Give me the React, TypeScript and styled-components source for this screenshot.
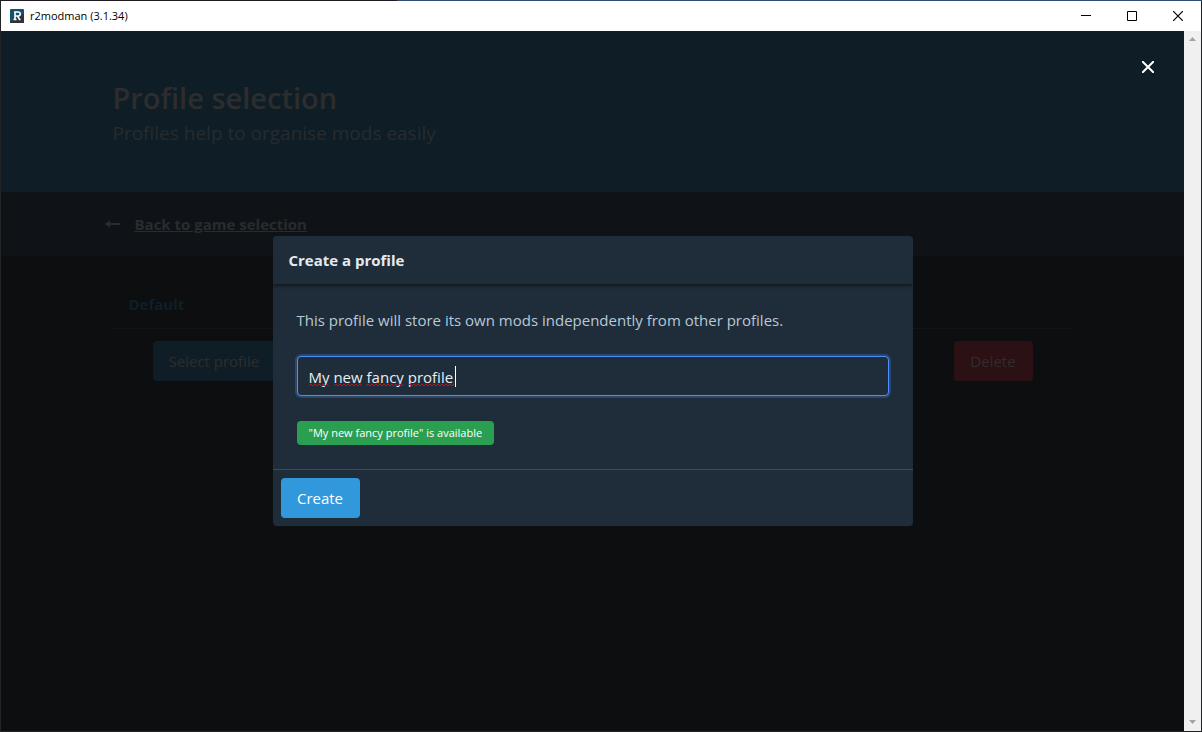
import React, { useState } from "react";
import styled, { createGlobalStyle } from "styled-components";

const GlobalStyle = createGlobalStyle`
  *, *::before, *::after { box-sizing: border-box; }
  html, body, #root { height: 100%; }
  body {
    margin: 0;
    overflow: hidden;
    background: #202124;
    font-family: "Segoe UI", "Open Sans", "Noto Sans", sans-serif;
    font-size: 15px;
    line-height: 24px;
  }
  h1, h2, p { margin: 0; font-size: inherit; font-weight: inherit; }
  button, input { font: inherit; }
`;

const Frame = styled.div`
  display: flex;
  flex-direction: column;
  height: 100vh;
  padding: 1px;
  background: linear-gradient(to right, #1d1b1f 33%, #2b4f70 33%) top / 100% 1px no-repeat #232425;
`;

const TitleBar = styled.header`
  display: flex;
  align-items: center;
  flex: none;
  height: 30px;
  padding-left: 9px;
  background: #fff;
  color: #000;
`;

const TitleText = styled.span`
  flex: 1;
  margin-left: 6px;
  font-size: 11px;
  line-height: 16px;
`;

const WindowButton = styled.button`
  display: grid;
  place-items: center;
  width: 46px;
  height: 30px;
  padding: 0;
  border: 0;
  background: transparent;
  color: #000;
`;

const Viewport = styled.div`
  display: flex;
  flex: 1;
  min-height: 0;
`;

const Page = styled.main`
  position: relative;
  flex: 1;
  min-width: 0;
  background: #0d0e10;
`;

const Container = styled.div`
  width: 100%;
  max-width: 960px;
  margin: 0 auto;
`;

const Hero = styled.section`
  height: 161px;
  padding-top: 49px;
  background: #0f1e26;
`;

const HeroTitle = styled.h1`
  color: #2d2d2d;
  font-size: 29px;
  font-weight: 600;
  line-height: 36px;
`;

const HeroSubtitle = styled.p`
  color: #272b2d;
  font-size: 19px;
  line-height: 34px;
`;

const BackBar = styled.nav`
  height: 64px;
  padding-top: 18px;
  background: #0f1317;
`;

const BackLink = styled.a`
  display: inline-flex;
  align-items: center;
  gap: 15px;
  margin-left: -8px;
  color: #292b2e;
  font-weight: 700;
  text-decoration: none;

  span { text-decoration: underline; }
`;

const ProfileName = styled.h2`
  padding: 36px 16px 12px;
  border-bottom: 1px solid #131416;
  color: #0f1f2a;
  font-weight: 700;
`;

const ProfileActions = styled.div`
  display: flex;
  justify-content: space-between;
  padding: 12px 40px;
`;

type Tone = "primary" | "mutedPrimary" | "mutedDanger";

const tones: Record<Tone, [string, string]> = {
  primary: ["#3298dc", "#fff"],
  mutedPrimary: ["#0f1e26", "#2d2d2d"],
  mutedDanger: ["#2b1014", "#2f2d2d"],
};

const Button = styled.button<{ $tone: Tone }>`
  min-width: 79px;
  height: 40px;
  padding: 0 16px;
  border: 0;
  border-radius: 4px;
  background: ${({ $tone }) => tones[$tone][0]};
  color: ${({ $tone }) => tones[$tone][1]};
`;

const ModalLayer = styled.div`
  position: absolute;
  inset: 0;
  display: flex;
  align-items: center;
  justify-content: center;
`;

const CloseButton = styled.button`
  position: absolute;
  top: 20px;
  right: 20px;
  display: grid;
  place-items: center;
  width: 32px;
  height: 32px;
  padding: 0;
  border: 0;
  background: transparent;
  color: #fff;
`;

const Card = styled.form`
  width: 640px;
  max-width: 100%;
  overflow: hidden;
  border-radius: 4px;
  background: #1f2d3a;
`;

const CardHeader = styled.h2`
  padding: 12px 16px;
  color: #e4eaf0;
  font-weight: 700;
  box-shadow: 0 1px 4px rgba(0, 0, 0, 0.7);
`;

const CardBody = styled.div`
  display: flex;
  flex-direction: column;
  align-items: flex-start;
  gap: 24px;
  padding: 24px;
  color: #b8c8d8;
`;

const Field = styled.div`
  position: relative;
  width: 100%;
`;

const NameInput = styled.input`
  display: block;
  width: 100%;
  height: 40px;
  padding: 2px 11px 0;
  border: 1px solid #4f8ffa;
  border-radius: 4px;
  outline: 0;
  background: #1f2d3a;
  box-shadow: 0 0 0 2px rgba(72, 127, 230, 0.3);
  color: #e8edf2;
`;

const TextMarks = styled.svg`
  position: absolute;
  top: 10px;
  left: 12px;
  pointer-events: none;
`;

const Status = styled.div`
  display: flex;
  align-items: flex-end;
  height: 25px;
`;

const Tag = styled.output`
  height: 24px;
  padding: 0 12px;
  border-radius: 4px;
  background: #2a9f52;
  color: #fff;
  font-size: 11px;
`;

const CardFooter = styled.footer`
  padding: 8px;
  border-top: 1px solid #3b4a58;
  line-height: 0;
`;

const Scrollbar = styled.div`
  display: flex;
  flex-direction: column;
  align-items: center;
  justify-content: space-between;
  flex: none;
  width: 17px;
  padding: 6px 0;
  background: #f0f0f0;
`;

const wordSpans: [number, number][] = [
  [0, 21],
  [25, 53],
  [57, 95],
  [99, 145],
];

function squiggle(from: number, to: number) {
  let d = `M${from} 20`;
  for (let x = from + 2, up = false; x <= to; x += 2, up = !up) {
    d += ` L${x} ${up ? 20 : 18}`;
  }
  return d;
}

export default function App() {
  const [name, setName] = useState("My new fancy profile");

  return (
    <>
      <GlobalStyle />
      <Frame>
        <TitleBar>
          <svg width="14" height="14" viewBox="0 0 14 14" aria-hidden="true">
            <rect width="14" height="14" rx="1" fill="#17506b" />
            <path d="M0 13 L14 5 V14 H0Z" fill="#303436" />
            <path d="M4 3h4.2a2 2 0 0 1 0 4H5.500M5 3v8M3.500 10.500h3M7.500 7l2 3.500h1" fill="none" stroke="#fff" strokeWidth="1.600" />
          </svg>
          <TitleText>r2modman (3.1.34)</TitleText>
          <WindowButton aria-label="Minimize">
            <svg width="10" height="10"><path d="M0 4.500h10" stroke="currentColor" /></svg>
          </WindowButton>
          <WindowButton aria-label="Maximize">
            <svg width="10" height="10"><path d="M.5.5h9v9h-9z" fill="none" stroke="currentColor" /></svg>
          </WindowButton>
          <WindowButton aria-label="Close window">
            <svg width="10" height="10"><path d="M0 0l10 10M10 0L0 10" stroke="currentColor" strokeWidth="1.200" /></svg>
          </WindowButton>
        </TitleBar>
        <Viewport>
          <Page>
            <Hero>
              <Container>
                <HeroTitle>Profile selection</HeroTitle>
                <HeroSubtitle>Profiles help to organise mods easily</HeroSubtitle>
              </Container>
            </Hero>
            <BackBar>
              <Container>
                <BackLink href="#games">
                  <svg width="15" height="8" viewBox="0 0 15 8" fill="currentColor" aria-hidden="true">
                    <path d="M0 4L5 0v3H15v2H5v3z" />
                  </svg>
                  <span>Back to game selection</span>
                </BackLink>
              </Container>
            </BackBar>
            <Container>
              <ProfileName>Default</ProfileName>
              <ProfileActions>
                <Button $tone="mutedPrimary">Select profile</Button>
                <Button $tone="mutedDanger">Delete</Button>
              </ProfileActions>
            </Container>
            <ModalLayer>
              <CloseButton aria-label="Close">
                <svg width="12" height="12"><path d="M0 0l12 12M12 0L0 12" stroke="currentColor" strokeWidth="2" /></svg>
              </CloseButton>
              <Card role="dialog" aria-labelledby="dialog-title" onSubmit={(e) => e.preventDefault()}>
                <CardHeader id="dialog-title">Create a profile</CardHeader>
                <CardBody>
                  <p id="dialog-note">This profile will store its own mods independently from other profiles.</p>
                  <Field>
                    <NameInput
                      aria-label="Profile name"
                      aria-describedby="dialog-note"
                      value={name}
                      spellCheck={false}
                      onChange={(e) => setName(e.target.value)}
                    />
                    <TextMarks width="150" height="22" aria-hidden="true">
                      {wordSpans.map(([from, to]) => (
                        <path key={from} d={squiggle(from, to)} fill="none" stroke="#b01822" />
                      ))}
                      <path d="M146.500 0v21" stroke="#fff" />
                    </TextMarks>
                  </Field>
                  <Status>
                    <Tag>"{name}" is available</Tag>
                  </Status>
                </CardBody>
                <CardFooter>
                  <Button $tone="primary">Create</Button>
                </CardFooter>
              </Card>
            </ModalLayer>
          </Page>
          <Scrollbar aria-hidden="true">
            <svg width="7" height="5"><path d="M0 4L3.500 0L7 4z" fill="#a3a3a3" /></svg>
            <svg width="7" height="5"><path d="M0 0L3.500 4L7 0z" fill="#a3a3a3" /></svg>
          </Scrollbar>
        </Viewport>
      </Frame>
    </>
  );
}
